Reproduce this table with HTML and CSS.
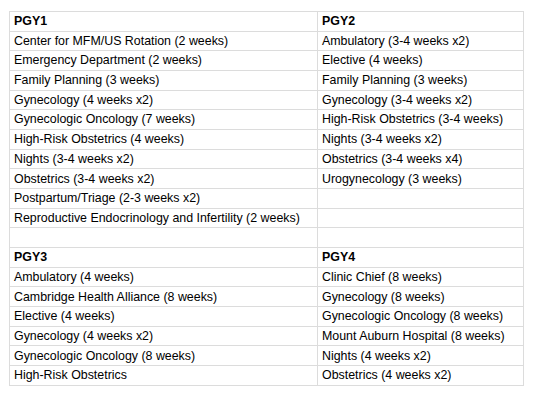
FILE: index.html
```html
<!DOCTYPE html>
<html>
<head>
<meta charset="utf-8">
<link rel="stylesheet" href="styles.css">
</head>
<body>
<div class="sheet">
  <div class="cell head">PGY1</div><div class="cell head">PGY2</div>
  <div class="cell">Center for MFM/US Rotation (2 weeks)</div><div class="cell">Ambulatory (3-4 weeks x2)</div>
  <div class="cell">Emergency Department (2 weeks)</div><div class="cell">Elective (4 weeks)</div>
  <div class="cell">Family Planning (3 weeks)</div><div class="cell">Family Planning (3 weeks)</div>
  <div class="cell">Gynecology (4 weeks x2)</div><div class="cell">Gynecology (3-4 weeks x2)</div>
  <div class="cell">Gynecologic Oncology (7 weeks)</div><div class="cell">High-Risk Obstetrics (3-4 weeks)</div>
  <div class="cell">High-Risk Obstetrics (4 weeks)</div><div class="cell">Nights (3-4 weeks x2)</div>
  <div class="cell">Nights (3-4 weeks x2)</div><div class="cell">Obstetrics (3-4 weeks x4)</div>
  <div class="cell">Obstetrics (3-4 weeks x2)</div><div class="cell">Urogynecology (3 weeks)</div>
  <div class="cell">Postpartum/Triage (2-3 weeks x2)</div><div class="cell"></div>
  <div class="cell">Reproductive Endocrinology and Infertility (2 weeks)</div><div class="cell"></div>
  <div class="cell"></div><div class="cell"></div>
  <div class="cell head">PGY3</div><div class="cell head">PGY4</div>
  <div class="cell">Ambulatory (4 weeks)</div><div class="cell">Clinic Chief (8 weeks)</div>
  <div class="cell">Cambridge Health Alliance (8 weeks)</div><div class="cell">Gynecology (8 weeks)</div>
  <div class="cell">Elective (4 weeks)</div><div class="cell">Gynecologic Oncology (8 weeks)</div>
  <div class="cell">Gynecology (4 weeks x2)</div><div class="cell">Mount Auburn Hospital (8 weeks)</div>
  <div class="cell">Gynecologic Oncology (8 weeks)</div><div class="cell">Nights (4 weeks x2)</div>
  <div class="cell">High-Risk Obstetrics</div><div class="cell">Obstetrics (4 weeks x2)</div>
</div>
</body>
</html>
```
FILE: styles.css
```css
html, body {
  margin: 0;
  padding: 0;
  background: #fff;
}
body {
  padding: 11px 0 0 9px;
  font-family: "Liberation Sans", Arial, sans-serif;
  font-size: 12.4px;
  color: #000;
}
.sheet {
  display: grid;
  grid-template-columns: 307px 205px;
  grid-auto-rows: 18.68px;
  gap: 1px;
  padding: 1px;
  width: 515px;
  box-sizing: border-box;
  background: #dcdcdc;
}
.cell {
  background: #fff;
  padding: 0 4px;
  display: flex;
  align-items: center;
  white-space: nowrap;
  overflow: hidden;
  line-height: 1;
}
.head {
  font-weight: bold;
}
```
